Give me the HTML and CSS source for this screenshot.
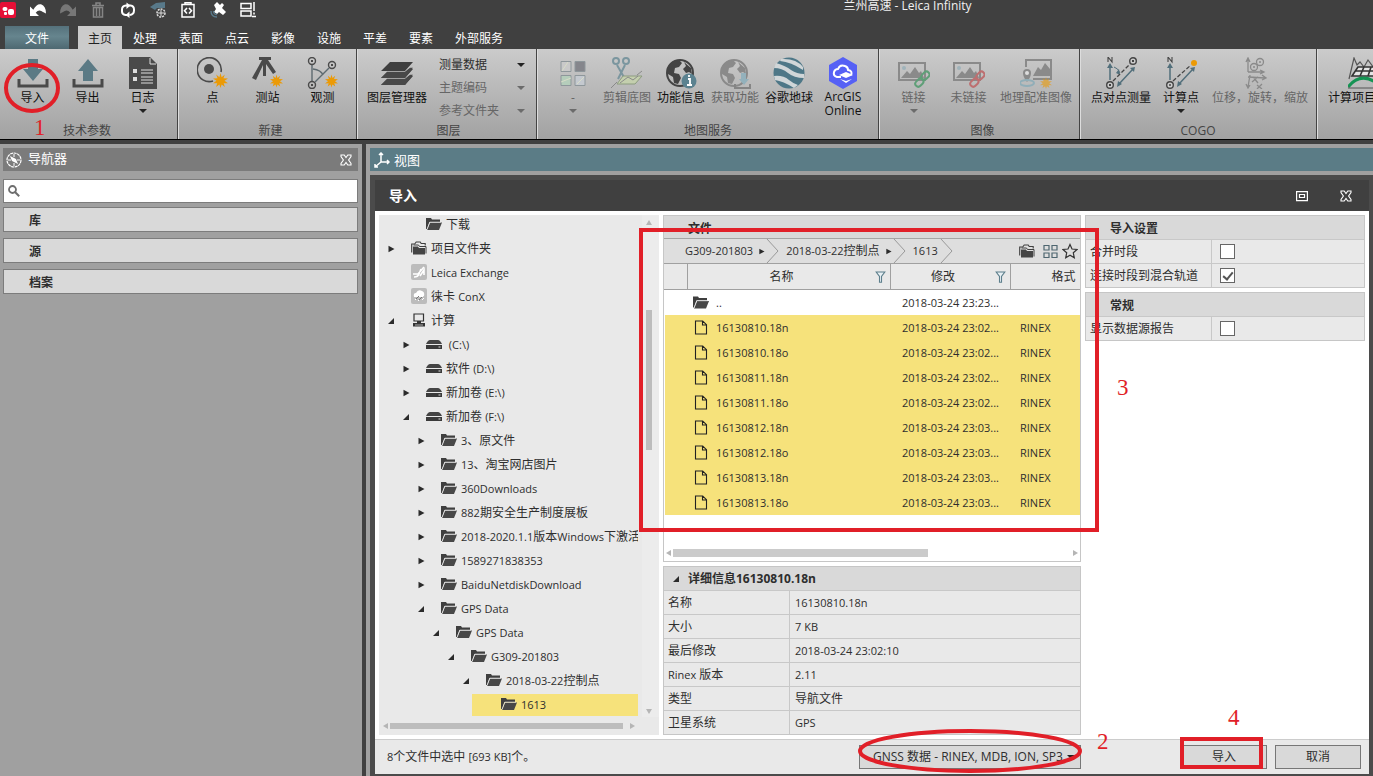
FILE: index.html
```html
<!DOCTYPE html>
<html lang="zh-CN">
<head>
<meta charset="utf-8">
<title>兰州高速 - Leica Infinity</title>
<link rel="stylesheet" href="styles.css">
</head>
<body>
<svg class="sprite" aria-hidden="true">
  <symbol id="folder" viewBox="0 0 16 14"><path d="M0 12V1h5l1 1.500h8V5H3.500L1 12z" fill="#3f3f3f"/><path d="M4 5.500h12L13 13H1z" fill="#484848"/><path d="M1 12.500 3.800 5.200H15" fill="none" stroke="#eee" stroke-width=".8"/></symbol>
  <symbol id="folders" viewBox="0 0 16 15"><path d="M.7 12V3.500h3l1.500-2h4l1 1.500h4v2" fill="none" stroke="#3f3f3f" stroke-width="1.100"/><path d="M2 14V6h5l1 1.500h6V14z" fill="#444"/><path d="M2.500 4.500h5l1 1.500h6.500V13" fill="none" stroke="#3f3f3f"/></symbol>
  <symbol id="drive" viewBox="0 0 16 10"><path d="M0 5q2-4 4-4h8q2 0 4 4z" fill="#444"/><path d="M0 6h16v4H0z" fill="#3a3a3a"/><path d="M12.500 7.500h2v1h-2z" fill="#ddd"/></symbol>
  <symbol id="file" viewBox="0 0 13 15"><path d="M1 1h7.200L12 4.700V14H1zM8 1v4h4" fill="none" stroke="#222" stroke-width="1.100"/></symbol>
  <symbol id="funnel" viewBox="0 0 10 12"><path d="M.7 1h8.600L6 5.500v5.800H4V5.500z" fill="#e8f0f4" stroke="#5d7f8c" stroke-width="1.100"/></symbol>
  <symbol id="close" viewBox="0 0 12 12"><path d="M1 1h3.200L6 3.500 7.800 1H11v1.500L8.600 6 11 9.500V11H7.800L6 8.500 4.200 11H1V9.500L3.400 6 1 2.500z" fill="none" stroke="#fff" stroke-width="1.100"/></symbol>
  <symbol id="closed" viewBox="0 0 8 8"><path d="M1.500.8 7.500 4l-6 3.200z" fill="#2b2b2b"/></symbol>
  <symbol id="open" viewBox="0 0 8 8"><path d="M7 1v6H1z" fill="#2b2b2b"/></symbol>
  <symbol id="spark" viewBox="0 0 16 16"><path d="m8 0 1.200 4.400L12.600 1.600l-1.500 4L16 5.800l-3.700 2.500L16 11l-4.600-.2 1.200 4-3.400-2.600L8 16l-1.200-3.800-3.500 2.600 1.200-4L0 11l3.700-2.700L0 5.800l4.800-.2-1.400-4 3.400 2.800z" fill="#eb9a06"/></symbol>
  <symbol id="picture" viewBox="0 0 32 32"><path d="M1 6h26v17H1z" fill="none" stroke="currentColor" stroke-width="2"/><path d="m3 21 6-7 3 3 5-7 4 6 2-2 3 7z" fill="currentColor"/><circle cx="6" cy="11" r="2" fill="#9fb3ba"/></symbol>
  <symbol id="globe" viewBox="0 0 32 32"><circle cx="15" cy="16" r="13" fill="none" stroke="currentColor" stroke-width="2"/><path d="M3 10q5-8 11-7l3 3-3 4-4 1-1 5 5 1 2 4-3 6-4-1-1-6-5-3zM19 5l7 6 1 6-3-2-3 1-3-4 3-3z" fill="currentColor"/></symbol>
</svg>

<div class="app">
  <header class="topbar">
    <div class="quick">
      <svg class="q" viewBox="0 0 16 16"><rect width="16" height="16" rx="2" fill="#e60f36"/><rect x="2.500" y="5" width="5" height="4" rx="2" fill="#fff"/><rect x="8" y="7" width="6" height="6" rx="2" fill="#fff"/><rect x="4" y="10" width="3" height="3" rx="1" fill="#fff"/></svg>
      <button class="qb" aria-label="撤销"><svg class="q" viewBox="0 0 16 16"><path d="M0 4.500V14h9l-3.300-3.300Q9 6.500 13 10l3 1.500Q16 4 11 2.300 6.500 1.500 3.300 7.800z" fill="#fff"/></svg></button>
      <button class="qb" aria-label="重做"><svg class="q" viewBox="0 0 16 16"><path d="M16 4.500V14H7l3.300-3.300Q7 6.500 3 10L0 11.500Q0 4 5 2.300 9.500 1.500 12.700 7.800z" fill="#777"/></svg></button>
      <button class="qb" aria-label="删除"><svg class="q" viewBox="0 0 16 16"><path d="M2 3.500h12M6 3V1h4v2M3.500 5.500V15h9V5.500zM6.500 6v8M9.500 6v8" fill="none" stroke="#858585" stroke-width="1.500"/></svg></button>
      <button class="qb" aria-label="同步"><svg class="q" viewBox="0 0 16 16"><path d="M7 13H5.500Q2 12.500 2 9.500V7.500Q2 4 6 3.500h1M9 3.500h1.500Q14 4 14 7.500v1Q14 12.500 9.500 13" fill="none" stroke="#fff" stroke-width="2"/><path d="M6.500.5 10.500 3.500l-4 3.500zM9.500 9.500v6.500l-4-3z" fill="#fff"/></svg></button>
      <button class="qb" aria-label="全局设置"><svg class="q" viewBox="0 0 16 16"><path d="M0 5 6 1l9-1v6L7 6 5 8z" fill="#58798a"/><circle cx="11" cy="11" r="4" fill="none" stroke="#ddd" stroke-width="1.500" stroke-dasharray="2 1"/><path d="M7.500 11h7M11 7.500v7" stroke="#ddd"/></svg></button>
      <button class="qb" aria-label="脚本"><svg class="q" viewBox="0 0 16 16"><path d="M2 2.500h12V15H2zM5 2.500V.8h6v1.700" fill="none" stroke="#fff" stroke-width="1.500"/><path d="m7 6-2.500 2.800L7 11.500M9 6l2.500 2.800L9 11.500" fill="none" stroke="#fff" stroke-width="1.600"/></svg></button>
      <button class="qb" aria-label="卫星"><svg class="q" viewBox="0 0 16 16"><path d="m4 3 3-3 3 3 2-2 2 2-2 3 4 4-3 3-4-3-2 2-3-2 2-3z" fill="#fff"/><path d="M1 9q0 6 6 6M3.500 9q0 3.500 3.500 3.500" fill="none" stroke="#58798a" stroke-width="1.300"/></svg></button>
      <button class="qb" aria-label="布局"><svg class="q" viewBox="0 0 16 16"><path d="M1 1.500h10v5H1zM1 9h10v5H1zM14 0v9M12 14.500h4M14 10.500v2" fill="none" stroke="#fff" stroke-width="1.500"/></svg></button>
    </div>
    <h1 class="title">兰州高速 - Leica Infinity</h1>
  </header>
  <nav class="tabs">
    <button class="tab file">文件</button>
    <button class="tab active">主页</button>
    <button class="tab">处理</button>
    <button class="tab">表面</button>
    <button class="tab">点云</button>
    <button class="tab">影像</button>
    <button class="tab">设施</button>
    <button class="tab">平差</button>
    <button class="tab">要素</button>
    <button class="tab wide">外部服务</button>
  </nav>

  <div class="ribbon">
    <section class="group g-data">
      <div class="tools">
        <button class="tool"><svg class="ico" viewBox="0 0 32 32"><path d="M11 2h10v10h5L16 24 6 12h5z" fill="#5b7a85"/><path d="M2 22v7h28v-7" fill="none" stroke="#4a4a4a" stroke-width="3"/></svg><span>导入</span></button>
        <button class="tool"><svg class="ico" viewBox="0 0 32 32"><path d="M11 24h10V14h5L16 2 6 14h5z" fill="#5b7a85"/><path d="M2 22v7h28v-7" fill="none" stroke="#4a4a4a" stroke-width="3"/></svg><span>导出</span></button>
        <button class="tool"><svg class="ico" viewBox="0 0 32 32"><path d="M2 0h21l7 7v25H2z" fill="#4a4a4a"/><path d="M23 1v6h6" fill="none" stroke="#ddd"/><path d="M6 12h4v4H6zM6 20h4v4H6z" fill="#ddd"/><path d="M14 13h12M14 16h12M14 20h12M14 23h12M14 26h12" stroke="#ddd"/></svg><span>日志</span><i class="caret"></i></button>
      </div>
      <h2>技术参数</h2>
    </section>
    <section class="group g-new">
      <div class="tools">
        <button class="tool"><svg class="ico" viewBox="0 0 32 32"><path d="M16 24A12 12 0 1 1 24 15" fill="none" stroke="#4a4a4a" stroke-width="1.600"/><circle cx="12" cy="12" r="5" fill="#4a4a4a"/><use href="#spark" x="16" y="16" width="15" height="15"/></svg><span>点</span></button>
        <button class="tool"><svg class="ico" viewBox="0 0 32 32"><path d="M7 0h12v3H7zM10 3h6l8 12-3 2-7-10v12h-3V8L4 23l-4-2z" fill="#4a4a4a"/><use href="#spark" x="18" y="17" width="13" height="14"/></svg><span>测站</span></button>
        <button class="tool"><svg class="ico" viewBox="0 0 32 32"><path d="M5 7v18M8 25 22 11M6 12q8 1 10 6" fill="none" stroke="#5d6a70" stroke-width="1.400"/><g fill="none" stroke="#4a4a4a" stroke-width="1.400"><circle cx="5" cy="4" r="3.500"/><circle cx="5" cy="28" r="3.500"/><circle cx="25" cy="8" r="3.500"/></g><path d="M4 3h2v2H4zM4 27h2v2H4zM24 7h2v2h-2z" fill="#4a4a4a"/><use href="#spark" x="18" y="17" width="13" height="14"/></svg><span>观测</span></button>
      </div>
      <h2>新建</h2>
    </section>
    <section class="group g-layer">
      <div class="tools">
        <button class="tool w72"><svg class="ico" viewBox="0 0 32 32"><path d="M9 5h23l-8 9H0zM5 16.500 0 21h24l8-9h-4l-6 6.500H4zM5 23.500 0 28h24l8-9h-4l-6 6.500H4z" fill="#3f3f3f"/><path d="M6 14.800h18l5-4h3l-8 10.200H0zM6 21.800h18l5-4h3l-8 10.200H0z" fill="#484848"/></svg><span>图层管理器</span></button>
        <div class="menus">
          <button class="menu">测量数据<i class="caret"></i></button>
          <button class="menu off">主题编码<i class="caret"></i></button>
          <button class="menu off">参考文件夹<i class="caret"></i></button>
        </div>
      </div>
      <h2>图层</h2>
    </section>
    <section class="group g-map">
      <div class="tools">
        <button class="tool w54 off"><svg class="ico" viewBox="0 0 32 32"><g stroke="#8e979b"><path d="M4 4.500h10v10H4z" fill="#c9c9c9"/><path d="M18 4.500h10v10H18z" fill="#85868c"/><path d="M4 18.500h10v10H4z" fill="#b5cdbb"/><path d="M18 18.500h10v10H18z" fill="#c4c9cf"/></g><path d="m5 14 6-9M4 25l10-4M20 27l7-7" stroke="#d8dcc8"/></svg><span>-</span><i class="caret"></i></button>
        <button class="tool w54 off"><svg class="ico" viewBox="0 0 32 32"><path d="m6 8 8 14M14 8 7 22" stroke="#7b969f" stroke-width="2"/><g fill="none" stroke="#7b969f" stroke-width="2"><circle cx="5" cy="4" r="3"/><circle cx="15" cy="4" r="3"/></g><path d="M12 19h19l-7 8H6z" fill="#c4cfae" stroke="#8d9c80"/><path d="m0 31 6-6M26 18l5-4M9 26l8-6 5 3 5-4" stroke="#8a8a8a" fill="none"/></svg><span>剪辑底图</span></button>
        <button class="tool w54"><svg class="ico dark" viewBox="0 0 32 32"><use href="#globe"/><circle cx="24" cy="24" r="7.500" fill="#5b8290"/><path d="M23 22h2v6m-3 0h5M24 18v2" fill="none" stroke="#fff" stroke-width="1.800"/></svg><span>功能信息</span></button>
        <button class="tool w54 off"><svg class="ico faint" viewBox="0 0 32 32"><use href="#globe"/><path d="M22 16h5v6h3l-5 6-5-6h2z" fill="#93b1bc"/><path d="M16 27v4h15v-4" fill="none" stroke="#858585" stroke-width="2"/></svg><span>获取功能</span></button>
        <button class="tool w54"><svg class="ico" viewBox="0 0 32 32"><circle cx="16" cy="16" r="15.500" fill="#4e7787"/><path d="M3 6q10 3 15 7 6 4 13 4v4q-10 0-16-5Q9 11 1 11zM1 19q9-1 15 4 5 4 9 5l-4 3Q10 24 2 23zM8 2q15-1 22 8v3Q18 5 7 4z" fill="#d0d6d8"/></svg><span>谷歌地球</span></button>
        <button class="tool w54"><svg class="ico" viewBox="0 0 32 32"><path d="m16 0 14 8v16l-14 8L2 24V8z" fill="#5661f5"/><path d="M14 20H10q-4-1-3-5 1-3 4-3 2-5 7-3 3 1 3 4 5 1 3 5" fill="none" stroke="#fff" stroke-width="2"/><path d="m12 18 7-3 7 3-7 3zM13 22l6 2 6-2-6 4z" fill="#fff"/></svg><span class="two">ArcGIS Online</span></button>
      </div>
      <h2>地图服务</h2>
    </section>
    <section class="group g-image">
      <div class="tools">
        <button class="tool off"><svg class="ico faint" viewBox="0 0 32 32"><use href="#picture"/><g fill="none" stroke="#5f9f78" stroke-width="2"><rect x="23" y="16" width="9" height="6" rx="3" transform="rotate(-45 27 19)"/><rect x="17" y="23" width="9" height="6" rx="3" transform="rotate(-45 21 26)"/></g></svg><span>链接</span><i class="caret"></i></button>
        <button class="tool off"><svg class="ico faint" viewBox="0 0 32 32"><use href="#picture"/><g fill="none" stroke="#bd6f70" stroke-width="2"><rect x="23" y="16" width="9" height="6" rx="3" transform="rotate(-45 27 19)"/><rect x="17" y="23" width="9" height="6" rx="3" transform="rotate(-45 21 26)"/></g></svg><span>未链接</span></button>
        <button class="tool w80 off"><svg class="ico faint" viewBox="0 0 32 32"><path d="M6 10V3h25v19H13" fill="none" stroke="currentColor" stroke-width="2"/><path d="m13 19 5-9 3 3 4-7 5 6v7zM7 12a4 4 0 0 1 4 4q0 4-4 9-4-5-4-9a4 4 0 0 1 4-4" fill="currentColor"/><circle cx="7" cy="16" r="2" fill="#ddd"/><ellipse cx="7" cy="26" rx="7" ry="3" fill="none" stroke="#91aeb8" stroke-width="2"/><g opacity=".6"><use href="#spark" x="20" y="20" width="12" height="12"/></g></svg><span>地理配准图像</span></button>
      </div>
      <h2>图像</h2>
    </section>
    <section class="group g-cogo">
      <div class="tools">
        <button class="tool w66"><svg class="ico" viewBox="0 0 32 32"><path d="M3 5V0l4 5V0" fill="none" stroke="#444" stroke-width="1.100"/><path d="M5 23V10M14 27l14-15" stroke="#526f7b" stroke-width="1.500"/><path d="m2 11 3-5 3 5zM12 30l1-6 4 3zM30 10l-5 1 4 4zM15 18l-1-6-3 4z" fill="#526f7b"/><path d="M8 24 26 6" stroke="#444" stroke-width="1.300" stroke-dasharray="4 2"/><path d="M9 10q4 1 6 6" fill="none" stroke="#526f7b"/><g fill="#ccc" stroke="#444" stroke-width="1.400"><circle cx="5" cy="28" r="3.300"/><circle cx="28" cy="4" r="3.300"/></g><path d="M4 27h2v2H4zM27 3h2v2h-2z" fill="#444"/></svg><span>点对点测量</span></button>
        <button class="tool w54"><svg class="ico" viewBox="0 0 32 32"><path d="M3 5V0l4 5V0" fill="none" stroke="#444" stroke-width="1.100"/><path d="M5 23V10M14 27l14-15" stroke="#526f7b" stroke-width="1.500"/><path d="m2 11 3-5 3 5zM12 30l1-6 4 3zM30 10l-5 1 4 4z" fill="#526f7b"/><path d="M8 24 26 8" stroke="#444" stroke-width="1.300" stroke-dasharray="4 2"/><circle cx="5" cy="28" r="3.300" fill="#ccc" stroke="#444" stroke-width="1.400"/><circle cx="5" cy="28" r="1" fill="#444"/><circle cx="29" cy="6" r="3" fill="#eb9a06"/></svg><span>计算点</span><i class="caret"></i></button>
        <button class="tool w104 off"><svg class="ico faint" viewBox="0 0 32 32"><g fill="none" stroke="currentColor" stroke-width="1.300"><path d="M4 15V2m-2 3 2-4 2 4M4 15h15m-3-2 4 2-4 2M4 20l17 1m-3-3 4 3-4 2M6 18 4 30m-2-3 2 4 2-3M9 20l5 6m0-6-6 5M13 28l5 4m0-5-5 5"/><circle cx="10" cy="10" r="3.500"/><circle cx="16" cy="5" r="3.500"/></g><circle cx="10" cy="10" r="1" fill="currentColor"/><circle cx="16" cy="5" r="1" fill="currentColor"/></svg><span>位移，旋转，缩放</span></button>
      </div>
      <h2>COGO</h2>
    </section>
    <section class="group g-more">
      <div class="tools">
        <button class="tool w72"><svg class="ico" viewBox="0 0 32 32"><path d="M1 22 6 1l3 7 3-3 4 5 4-7 9 12" fill="none" stroke="#555" stroke-width="1.200"/><path d="m10 10-6 9h24l4-9zM8 14h23M16 10l-4 9M23 10l-3 9" fill="#e5e5e5" stroke="#333" stroke-width="1.600"/><path d="M0 30q13-16 30-3" fill="none" stroke="#159353" stroke-width="3"/><path d="M0 31h29" stroke="#555"/></svg><span class="start">计算项目</span></button>
      </div>
    </section>
  </div>

  <main class="work">
    <aside class="navigator">
      <div class="panelhead">
        <svg class="i16" viewBox="0 0 16 16"><circle cx="8" cy="8" r="7" fill="none" stroke="#fff" stroke-width="1.200" stroke-dasharray="3 .6"/><path d="m4 4 6 3 2 5-6-3z" fill="#fff"/><path d="M8 2v3M8 11v3M2 8h3M11 8h3" stroke="#fff"/></svg>
        <h2>导航器</h2>
        <button class="plain" aria-label="关闭导航器"><svg class="i12" viewBox="0 0 12 12"><use href="#close"/></svg></button>
      </div>
      <label class="search">
        <svg class="i12" viewBox="0 0 12 12"><circle cx="4.500" cy="4.500" r="3.500" fill="none" stroke="#6e6e6e" stroke-width="1.800"/><path d="m7 7 4.200 4.200" stroke="#6e6e6e" stroke-width="2"/></svg>
        <input type="text" aria-label="搜索">
      </label>
      <button class="navitem">库</button>
      <button class="navitem">源</button>
      <button class="navitem">档案</button>
    </aside>

    <section class="view">
      <div class="viewhead">
        <svg class="i16" viewBox="0 0 16 16"><path d="M7 1v9h8M7 10l-6 5M5 3l2-2 2 2M13 8l2 2-2 2M1 12v3h3" fill="none" stroke="#fff" stroke-width="1.500"/></svg>
        <h2>视图</h2>
      </div>
      <div class="dialog" role="dialog" aria-labelledby="dlg">
        <div class="dialoghead">
          <h2 id="dlg">导入</h2>
          <button class="plain" aria-label="最大化"><svg class="i12" viewBox="0 0 12 12"><path d="M.6 1.600h10.800v9H.6zM3.500 4.500h5v3h-5z" fill="none" stroke="#fff" stroke-width="1.200"/></svg></button>
          <button class="plain" aria-label="关闭"><svg class="i12" viewBox="0 0 12 12"><use href="#close"/></svg></button>
        </div>

        <div class="dialogbody">
          <div class="treebox">
            <ul class="tree">
              <li><ul>
                <li><div class="node"><i class="tw"></i><svg class="ic"><use href="#folder"/></svg><span>下载</span></div></li>
              </ul></li>
              <li><div class="node"><svg class="tw"><use href="#closed"/></svg><svg class="ic"><use href="#folders"/></svg><span>项目文件夹</span></div></li>
              <li><div class="node"><i class="tw"></i><svg class="ic" viewBox="0 0 16 16"><rect width="16" height="16" rx="2" fill="#bcbcbc"/><path d="M2 10h5l6-7M3 13q4 0 5-3l2-5M9 12l4-6v5" fill="none" stroke="#fff" stroke-width="1.600"/></svg><span class="en">Leica Exchange</span></div></li>
              <li><div class="node"><i class="tw"></i><svg class="ic" viewBox="0 0 16 16"><rect width="16" height="16" rx="2" fill="#bcbcbc"/><path d="M3 9q-1-4 2-4 2-4 6-2 3 1 2 5l-2 1H3z" fill="#fff"/><path d="m4 12 4-4M7 13l5-5M11 12l2-2" stroke="#fff"/><path d="m5 11 3-3M8 12l3-3" stroke="#777"/></svg><span>徕卡 <span class="en">ConX</span></span></div></li>
              <li><div class="node"><svg class="tw"><use href="#open"/></svg><svg class="ic" viewBox="0 0 16 16"><path d="M3 2h9.500v7H3z" fill="none" stroke="#333" stroke-width="1.200"/><path d="M6 9h4v2H6z" fill="#333"/><path d="M2 11h12v3.500H2z" fill="#333"/><path d="M4 13h8" stroke="#ccc" stroke-width=".8"/></svg><span>计算</span></div>
                <ul>
                  <li><div class="node"><svg class="tw"><use href="#closed"/></svg><svg class="ic drv"><use href="#drive"/></svg><span class="en">&nbsp;(C:\)</span></div></li>
                  <li><div class="node"><svg class="tw"><use href="#closed"/></svg><svg class="ic drv"><use href="#drive"/></svg><span>软件 <span class="en">(D:\)</span></span></div></li>
                  <li><div class="node"><svg class="tw"><use href="#closed"/></svg><svg class="ic drv"><use href="#drive"/></svg><span>新加卷 <span class="en">(E:\)</span></span></div></li>
                  <li><div class="node"><svg class="tw"><use href="#open"/></svg><svg class="ic drv"><use href="#drive"/></svg><span>新加卷 <span class="en">(F:\)</span></span></div>
                    <ul>
                      <li><div class="node"><svg class="tw"><use href="#closed"/></svg><svg class="ic"><use href="#folder"/></svg><span><span class="en">3</span>、原文件</span></div></li>
                      <li><div class="node"><svg class="tw"><use href="#closed"/></svg><svg class="ic"><use href="#folder"/></svg><span><span class="en">13</span>、淘宝网店图片</span></div></li>
                      <li><div class="node"><svg class="tw"><use href="#closed"/></svg><svg class="ic"><use href="#folder"/></svg><span class="en">360Downloads</span></div></li>
                      <li><div class="node"><svg class="tw"><use href="#closed"/></svg><svg class="ic"><use href="#folder"/></svg><span><span class="en">882</span>期安全生产制度展板</span></div></li>
                      <li><div class="node"><svg class="tw"><use href="#closed"/></svg><svg class="ic"><use href="#folder"/></svg><span><span class="en">2018-2020.1.1</span>版本<span class="en">Windows</span>下激活</span></div></li>
                      <li><div class="node"><svg class="tw"><use href="#closed"/></svg><svg class="ic"><use href="#folder"/></svg><span class="en">1589271838353</span></div></li>
                      <li><div class="node"><svg class="tw"><use href="#closed"/></svg><svg class="ic"><use href="#folder"/></svg><span class="en">BaiduNetdiskDownload</span></div></li>
                      <li><div class="node"><svg class="tw"><use href="#open"/></svg><svg class="ic"><use href="#folder"/></svg><span class="en">GPS Data</span></div>
                        <ul><li><div class="node"><svg class="tw"><use href="#open"/></svg><svg class="ic"><use href="#folder"/></svg><span class="en">GPS Data</span></div>
                          <ul><li><div class="node"><svg class="tw"><use href="#open"/></svg><svg class="ic"><use href="#folder"/></svg><span class="en">G309-201803</span></div>
                            <ul><li><div class="node"><svg class="tw"><use href="#open"/></svg><svg class="ic"><use href="#folder"/></svg><span><span class="en">2018-03-22</span>控制点</span></div>
                              <ul><li><div class="node sel"><i class="tw"></i><svg class="ic"><use href="#folder"/></svg><span class="en">1613</span></div></li></ul>
                            </li></ul>
                          </li></ul>
                        </li></ul>
                      </li>
                    </ul>
                  </li>
                </ul>
              </li>
            </ul>
            <div class="vbar"><i class="au"></i><div class="track"><div class="thumb"></div></div><i class="ad"></i></div>
            <div class="hbar"><i class="al"></i><div class="track"><div class="thumb"></div></div><i class="ar"></i></div>
          </div>

          <div class="middle">
            <section class="box files">
              <h3 class="boxhead">文件</h3>
              <div class="crumbs">
                <a href="#" class="en">G309-201803</a><svg class="tw"><use href="#closed"/></svg><svg class="chev" viewBox="0 0 13 24"><path d="M1 0l11 12L1 24" fill="none" stroke="#999"/></svg>
                <a href="#"><span class="en">2018-03-22</span>控制点</a><svg class="tw"><use href="#closed"/></svg><svg class="chev" viewBox="0 0 13 24"><path d="M1 0l11 12L1 24" fill="none" stroke="#999"/></svg>
                <a href="#" class="en">1613</a><svg class="chev" viewBox="0 0 13 24"><path d="M1 0l11 12L1 24" fill="none" stroke="#999"/></svg>
                <span class="acts">
                  <button class="plain" aria-label="项目文件夹"><svg class="i16"><use href="#folders"/></svg></button>
                  <button class="plain" aria-label="视图方式"><svg class="i16" viewBox="0 0 16 16"><path d="M2 2.500h5v4.500H2zM10 2.500h5v4.500h-5zM2 10h5v4.500H2zM10 10h5v4.500h-5z" fill="none" stroke="#4e6670" stroke-width="1.200"/></svg></button>
                  <button class="plain" aria-label="收藏"><svg class="i16" viewBox="0 0 16 16"><path d="m8 1.500 2 4.500 5 .5-3.700 3.300 1 5L8 12.300l-4.300 2.500 1-5L1 6.500 6 6z" fill="none" stroke="#333" stroke-width="1.200"/></svg></button>
                </span>
              </div>
              <div class="tablewrap">
                <table class="filetable">
                  <colgroup><col class="c0"><col class="c1"><col class="c2"><col class="c3"></colgroup>
                  <thead><tr><th></th><th><div class="th"><span>名称</span><svg class="fn"><use href="#funnel"/></svg></div></th><th><div class="th"><span>修改</span><svg class="fn"><use href="#funnel"/></svg></div></th><th>格式</th></tr></thead>
                  <tbody>
                    <tr><td></td><td><div class="fname"><svg class="ic"><use href="#folder"/></svg>..</div></td><td>2018-03-24 23:23...</td><td></td></tr>
                    <tr class="on"><td></td><td><div class="fname"><svg class="ic"><use href="#file"/></svg>16130810.18n</div></td><td>2018-03-24 23:02...</td><td>RINEX</td></tr>
                    <tr class="on"><td></td><td><div class="fname"><svg class="ic"><use href="#file"/></svg>16130810.18o</div></td><td>2018-03-24 23:02...</td><td>RINEX</td></tr>
                    <tr class="on"><td></td><td><div class="fname"><svg class="ic"><use href="#file"/></svg>16130811.18n</div></td><td>2018-03-24 23:02...</td><td>RINEX</td></tr>
                    <tr class="on"><td></td><td><div class="fname"><svg class="ic"><use href="#file"/></svg>16130811.18o</div></td><td>2018-03-24 23:02...</td><td>RINEX</td></tr>
                    <tr class="on"><td></td><td><div class="fname"><svg class="ic"><use href="#file"/></svg>16130812.18n</div></td><td>2018-03-24 23:03...</td><td>RINEX</td></tr>
                    <tr class="on"><td></td><td><div class="fname"><svg class="ic"><use href="#file"/></svg>16130812.18o</div></td><td>2018-03-24 23:03...</td><td>RINEX</td></tr>
                    <tr class="on"><td></td><td><div class="fname"><svg class="ic"><use href="#file"/></svg>16130813.18n</div></td><td>2018-03-24 23:03...</td><td>RINEX</td></tr>
                    <tr class="on"><td></td><td><div class="fname"><svg class="ic"><use href="#file"/></svg>16130813.18o</div></td><td>2018-03-24 23:03...</td><td>RINEX</td></tr>
                  </tbody>
                </table>
              </div>
              <div class="hbar"><i class="al"></i><div class="track"><div class="thumb"></div></div><i class="ar"></i></div>
            </section>
            <section class="box">
              <h3 class="boxhead exp"><svg class="tw"><use href="#open"/></svg><span>详细信息16130810.18n</span></h3>
              <table class="props">
                <tr><th>名称</th><td class="en">16130810.18n</td></tr>
                <tr><th>大小</th><td class="en">7 KB</td></tr>
                <tr><th>最后修改</th><td class="en">2018-03-24 23:02:10</td></tr>
                <tr><th><span class="en">Rinex</span> 版本</th><td class="en">2.11</td></tr>
                <tr><th>类型</th><td>导航文件</td></tr>
                <tr><th>卫星系统</th><td class="en">GPS</td></tr>
              </table>
            </section>
          </div>

          <div class="settings">
            <section class="box">
              <h3 class="boxhead">导入设置</h3>
              <div class="opt"><label for="o1">合并时段</label><div><input type="checkbox" id="o1"></div></div>
              <div class="opt"><label for="o2">连接时段到混合轨道</label><div><input type="checkbox" id="o2" checked></div></div>
            </section>
            <section class="box">
              <h3 class="boxhead">常规</h3>
              <div class="opt"><label for="o3">显示数据源报告</label><div><input type="checkbox" id="o3"></div></div>
            </section>
          </div>
        </div>

        <footer class="dialogfoot">
          <span class="status"><span class="en">8</span>个文件中选中 <span class="en">[693 KB]</span>个。</span>
          <div class="pick"><select aria-label="文件类型"><option>GNSS 数据 - RINEX, MDB, ION, SP3</option></select><i class="caret"></i></div>
          <div class="actions">
            <button class="push">导入</button>
            <button class="push">取消</button>
          </div>
        </footer>
      </div>
    </section>
  </main>

  <svg class="marks" aria-hidden="true">
    <g fill="none" stroke="#e11f28">
      <ellipse cx="32" cy="88" rx="26" ry="23" stroke-width="4"/>
      <rect x="641" y="230" width="456" height="300" stroke-width="4"/>
      <ellipse cx="970" cy="751" rx="110" ry="20" stroke-width="4"/>
      <rect x="1182" y="739" width="79" height="28" stroke-width="4"/>
    </g>
    <g class="marknum" fill="#e11f28">
      <text x="34" y="135">1</text>
      <text x="1097" y="749">2</text>
      <text x="1117" y="395">3</text>
      <text x="1228" y="725">4</text>
    </g>
  </svg>
</div>
</body>
</html>
```
FILE: styles.css
```css
* { box-sizing: border-box; }
body {
  margin: 0;
  background: #404040;
  color: #2e2e2e;
  font-family: "Open Sans", "Noto Sans CJK SC", sans-serif;
  font-size: 12px;
  line-height: 16px;
  overflow: hidden;
}
button, input, select { font: inherit; color: inherit; margin: 0; border-radius: 0; }
button { border: 0; background: none; padding: 0; }
h1, h2, h3 { margin: 0; font-size: 12px; font-weight: 400; }
ul { list-style: none; margin: 0; padding: 0; }
a { color: inherit; text-decoration: none; }
svg { display: block; flex: none; }
.en { font-size: 11px; }
.sprite { position: absolute; width: 0; height: 0; }
.app { position: relative; height: 100vh; display: flex; flex-direction: column; }
.i16 { width: 16px; height: 16px; }
.i12 { width: 12px; height: 12px; }
.caret { border: 4px solid transparent; border-top-color: #222; border-bottom: 0; width: 0; height: 0; }
.off { color: #666; }
.off .caret { border-top-color: #6b6b6b; }

/* title bar and tabs */
.topbar { display: flex; height: 26px; color: #f2f2f2; }
.quick { display: flex; gap: 14px; padding-top: 2px; }
.q { width: 16px; height: 16px; }
.qb { height: 16px; }
.title { flex: 1; padding-left: 186px; text-align: center; line-height: 11px; }
.tabs { display: flex; height: 23px; padding-left: 5px; color: #fff; }
.tab { width: 46px; flex: none; padding-top: 2px; white-space: nowrap; }
.tab.file { width: 64px; margin-right: 9px; background: linear-gradient(#55717b, #66858e 45%, #4e6871); }
.tab.active { width: 44px; background: #cbcbcb; color: #222; }
.tab.wide { width: 70px; }

/* ribbon */
.ribbon {
  display: flex;
  height: 91px;
  flex: none;
  overflow: hidden;
  background: linear-gradient(#cbcbcb, #a2a2a2);
  border-bottom: 1px solid #000;
}
.group { flex: none; display: flex; flex-direction: column; justify-content: space-between; border-right: 1px solid #444; border-left: 1px solid #ddd; padding-top: 8px; }
.group h2 { text-align: center; color: #444; line-height: 16px; }
.tools { display: flex; }
.tool { width: 55px; flex: none; display: flex; flex-direction: column; align-items: center; white-space: nowrap; color: #111; }
.tool.off { color: #666; }
.tool span { margin-top: 1px; line-height: 16px; }
.tool .two { width: 48px; white-space: normal; line-height: 14px; }
.tool .caret { margin-top: 3px; }
.ico { width: 32px; height: 32px; }
.ico.dark { color: #444; }
.ico.faint { color: #8a8a8a; }
.w54 { width: 54px; }
.w66 { width: 66px; }
.w72 { width: 72px; }
.w80 { width: 80px; }
.w104 { width: 104px; }
.start { align-self: flex-start; }
.g-data { width: 178px; padding-left: 5px; border-left: 0; }
.g-new { width: 179px; padding-left: 6px; }
.g-layer { width: 180px; padding-left: 3px; }
.g-map { width: 342px; padding-left: 8px; }
.g-image { width: 201px; padding-left: 6px; }
.g-cogo { width: 237px; padding-left: 7px; }
.g-data h2, .g-map h2, .g-cogo h2 { padding-right: 8px; }
.g-more { width: 120px; padding-left: 10px; }
.menus { flex: 1; padding: 0 11px 0 6px; display: flex; flex-direction: column; gap: 7px; }
.menu { display: flex; justify-content: space-between; align-items: center; white-space: nowrap; }

/* work area */
.work { flex: 1; min-height: 0; display: flex; gap: 4px; padding-top: 4px; }
.navigator { width: 362px; flex: none; background: #a0a0a0; padding: 4px 4px 0 3px; }
.panelhead { display: flex; align-items: center; height: 23px; padding: 0 6px 0 3px; background: #7b7b7b; color: #fff; }
.panelhead h2 { flex: 1; padding: 0 6px 4px; font-size: 13px; }
.plain { display: flex; }
.search { display: flex; align-items: center; height: 24px; margin: 8px 0 4px; padding-left: 4px; background: #fff; border: 1px solid #7c7c7c; }
.search input { flex: 1; border: 0; background: none; outline: 0; }
.navitem { display: block; width: 100%; height: 25px; margin-bottom: 6px; padding: 2px 0 0 25px; border: 1px solid #7c7c7c; background: #d9d9d9; text-align: left; font-weight: 700; }

.view { flex: 1; min-width: 0; display: flex; flex-direction: column; background: #a0a0a0; padding: 4px 0 0 4px; }
.viewhead { display: flex; align-items: center; gap: 4px; height: 23px; flex: none; padding-left: 4px; background: #5b7c86; color: #fff; }
.viewhead h2 { font-size: 13px; }
.dialog { flex: 1; min-height: 0; display: flex; flex-direction: column; margin-top: 4px; border: solid #4b4b4b; border-width: 5px 4px 2px 5px; background: #fff; }
.dialoghead { display: flex; align-items: center; gap: 32px; height: 31px; flex: none; padding: 0 17px 0 14px; background: #404040; color: #fff; }
.dialoghead h2 { flex: 1; font-size: 14px; font-weight: 700; }
.dialogbody { flex: 1; min-height: 0; display: flex; gap: 4px; padding: 4px; }
.box { border: 1px solid #c6c6c6; }
.boxhead { height: 24px; padding: 1px 0 0 24px; background: #d9d9d9; border-bottom: 1px solid #c8c8c8; font-weight: 700; line-height: 23px; }

/* folder tree */
.treebox { width: 280px; flex: none; display: grid; grid-template: minmax(0, 1fr) 18px / minmax(0, 1fr) 21px; background: #e9e9e9; overflow: hidden; }
.tree { overflow: hidden; margin-top: -2px; padding-left: 3px; }
.tree ul { margin-left: 15px; }
.node { display: flex; align-items: center; height: 24px; border: solid transparent; border-width: 1px 0; background-clip: padding-box; padding-left: 5px; white-space: nowrap; }
.node.sel { background-color: #f6e27b; }
.tw { width: 8px; height: 8px; flex: none; }
.ic { width: 16px; height: 16px; margin: 0 4px 0 16px; }
.node .ic { margin-top: -2px; }
.node .drv { height: 10px; }
.vbar { display: flex; flex-direction: column; align-items: center; padding: 5px 4px 3px 0; margin-left: 4px; background: #ececec; }
.vbar .track { flex: 1; width: 6px; padding-top: 85px; }
.vbar .thumb { height: 140px; background: #bdbdbd; }
.hbar { display: flex; align-items: center; padding: 0 3px 0 4px; }
.hbar .track { flex: 1; padding: 0 7px 0 2px; }
.hbar .thumb { height: 6px; background: #bdbdbd; }
.al, .ar, .au, .ad { width: 0; height: 0; border: 3px solid transparent; }
.al { border-left: 0; border-right: 5px solid #b5b5b5; }
.ar { border-right: 0; border-left: 5px solid #b5b5b5; }
.au { border-top: 0; border-bottom: 5px solid #b5b5b5; }
.ad { border-bottom: 0; border-top: 5px solid #b5b5b5; }

/* file list */
.middle { width: 418px; flex: none; display: flex; flex-direction: column; gap: 4px; }
.files { flex: 1; min-height: 0; display: flex; flex-direction: column; }
.files .boxhead { height: 23px; border-color: #a5a5a5; }
.crumbs { display: flex; align-items: center; height: 24px; flex: none; padding-left: 21px; background: #dedede; }
.crumbs .tw { width: 7px; height: 7px; margin: 0 1px 0 5px; }
.chev { width: 13px; height: 24px; margin-right: 7px; }
.crumbs a + .chev { margin-left: 2px; }
.acts { display: flex; gap: 4px; margin-left: auto; padding-right: 2px; }
.acts button:first-child { margin-right: 3px; }
.tablewrap { flex: 1; overflow: hidden; }
.filetable { width: 453px; table-layout: fixed; border-collapse: separate; border-spacing: 0; }
.c0 { width: 24px; }
.c1 { width: 203px; }
.c2 { width: 120px; }
.filetable th { height: 27px; padding: 0; background: #e9e9e9; border: solid #a0a0a0; border-width: 1px 1px 1px 0; font-weight: 400; }
.th { display: flex; align-items: center; padding-right: 4px; }
.th span { flex: 1; }
.fn { width: 11px; height: 12px; }
.filetable td { height: 25px; padding: 0; font-size: 11px; white-space: nowrap; }
.filetable td:nth-child(3) { padding-left: 11px; }
.filetable td:nth-child(4) { padding-left: 9px; }
.filetable .on td { background: #f6e27b; }
.filetable td:first-child { border-left: 1px solid #fff; }
.fname { display: flex; align-items: center; }
.fname .ic { height: 15px; margin: 0 7px 0 5px; }
.files .hbar { height: 16px; padding: 0 2px; flex: none; }
.files .thumb { width: 65%; height: 8px; background: #cbcbcb; }

/* property tables */
.exp { display: flex; align-items: center; gap: 8px; padding: 0 0 0 8px; }
.props { width: 100%; border-collapse: separate; border-spacing: 0; background: #e9e9e9; }
.props th, .props td { height: 24px; padding: 0 4px; text-align: left; font-weight: 400; border-top: 1px solid #c8c8c8; }
.props tr:first-child > * { height: 23px; border-top: 0; }
.props th { width: 125px; }
.props td { border-left: 1px solid #c8c8c8; padding-left: 5px; }
.settings { flex: 1; display: flex; flex-direction: column; gap: 4px; }
.opt { display: grid; grid-template-columns: 125px 1fr; height: 23px; background: #e9e9e9; }
.opt + .opt { height: 24px; border-top: 1px solid #c8c8c8; }
.opt label { padding-left: 4px; line-height: 23px; }
.opt div { display: flex; align-items: center; padding-left: 8px; border-left: 1px solid #c8c8c8; }
.opt input { appearance: none; width: 15px; height: 15px; border: 1px solid #666; background: #fff; display: grid; place-items: center; }
.opt input:checked::after { content: ""; width: 4px; height: 8px; margin-bottom: 2px; border: solid #555; border-width: 0 2px 2px 0; transform: rotate(40deg); }

/* footer */
.dialogfoot { display: grid; grid-template-columns: 484px 222px 1fr; align-items: center; height: 35px; flex: none; background: #e9e9e9; border-top: 1px solid #ccc; }
.status { padding-left: 12px; }
.pick { position: relative; }
.pick select { appearance: none; display: block; width: 100%; height: 24px; padding: 0 14px 0 13px; border: 1px solid #777; background: #d9d9d9; }
.pick .caret { position: absolute; right: 6px; top: 10px; }
.actions { display: flex; justify-content: flex-end; gap: 8px; padding-right: 8px; }
.push { width: 86px; height: 24px; border: 1px solid #777; background: #d9d9d9; }

/* red callouts over the window */
.marks { position: absolute; left: 0; top: 0; width: 100%; height: 100%; pointer-events: none; }
.marknum { font-family: "Liberation Serif", serif; font-size: 23px; }
```
